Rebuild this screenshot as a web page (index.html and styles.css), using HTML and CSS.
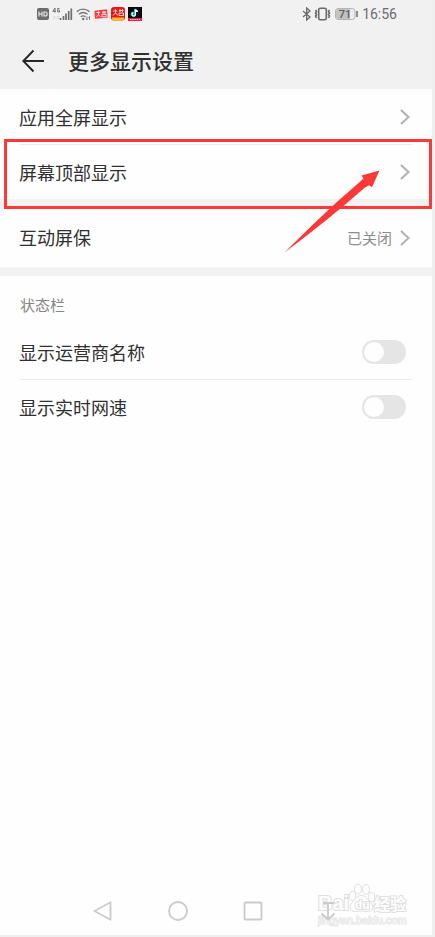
FILE: index.html
```html
<!DOCTYPE html>
<html lang="zh-CN">
<head>
<meta charset="utf-8">
<meta name="viewport" content="width=device-width, initial-scale=1">
<title>更多显示设置</title>
<link rel="stylesheet" href="styles.css">
</head>
<body>
<div class="screen">
  <header class="header">
    <div class="status">
      <div class="status-left">
        <svg width="12" height="12" viewBox="0 0 12 12"><rect width="12" height="12" rx="2" fill="#6c6c6c"/><path d="M2 3.500v5M5 3.500v5M2 6h3M7 4v4h1.200a2 2 0 0 0 0-4z" fill="none" stroke="#eee" stroke-width="1.100"/></svg>
        <svg width="21" height="14" viewBox="0 0 21 14"><path d="M3 5.500V1L.8 4.300h3M7.500 1.500H5.700V5h1.800V3.300h-1" fill="none" stroke="#707070"/><path d="M1 9.500h2v2H1M5 9.500h2v2H5z" fill="none" stroke="#ddd"/><path d="M8.500 13v-2M11.500 13V9M14 13V6.500M16.700 13V4M19.300 13V1.500" stroke="#707070" stroke-width="1.700"/></svg>
        <svg width="15" height="14" viewBox="0 0 15 14"><g fill="none" stroke="#777" stroke-width="1.400"><path d="M.8 4.600q6.200-5 12.700 0M2.800 7.300q4.400-3.700 8.700 0M4.800 9.800q2.300-1.800 4.700 0"/></g><circle cx="7.200" cy="12" r="1.200" fill="#777"/><path d="M11 9.500v3.500M10 11.500l1 1.500M13.500 13V9.500M12.500 11l1-1.500" stroke="#777" stroke-width=".9" fill="none"/></svg>
        <svg width="14" height="12" viewBox="0 0 15 12"><path d="M.5 2.500L14 1l.7 9L1 11z" fill="#f33b40"/><path d="M2.500 4.500h4M4.700 3v4L2.500 9M5 7l1.800 2M8.500 4h4.500M9.800 3v3M11.700 3v3M8.500 6.500h4.500v2.500h-4.500z" stroke="#fff" stroke-width=".8" fill="none"/></svg>
        <svg width="14" height="14" viewBox="0 0 14 14"><rect width="14" height="13.500" rx="3" fill="#ee1515"/><path d="M1 10.500h12v1a2 2 0 0 1-2 2H3a2 2 0 0 1-2-2z" fill="#ffc22e"/><path d="M2 4h4.500M4.500 2v4L2 8.500M4.800 6l2 2.500M8 3.500h4.500M9 2v3M11.500 2v3M8 6h4.500v2.500H8z" stroke="#ffe9df" stroke-width=".9" fill="none"/></svg>
        <svg width="14" height="14" viewBox="0 0 14 14"><path d="M0 0h14v11H0z" fill="#090909"/><path d="M0 11h14v3H0z" fill="#fb1747"/><path d="M2 12.500h10" stroke="#fff" stroke-width=".8" stroke-dasharray="1.500 .7"/><path d="M7 2v5a1.700 1.700 0 1 1-1.700-1.700M7 2q.5 2 2.700 2.200" fill="none" stroke="#20dce8" stroke-width="1.800"/><path d="M7.500 2.500v5A1.700 1.700 0 1 1 5.800 5.800M7.500 2.500Q8 4.300 10 4.500" fill="none" stroke="#fff" stroke-width="1.200"/></svg>
      </div>
      <div class="status-right">
        <svg width="10" height="14" viewBox="0 0 10 14"><path d="M1 4l7 6-3.300 3V1L8 4l-7 6" fill="none" stroke="#6a6a6a" stroke-width="1.300"/></svg>
        <svg width="17" height="14" viewBox="0 0 17 14"><rect x="4.700" y="1.200" width="7.600" height="11.600" rx="1.500" fill="none" stroke="#696969" stroke-width="1.600"/><path d="M1.500 3l1 1.500-1 1.500 1 1.500-1 1.500 1 2M15.500 3l-1 1.500 1 1.500-1 1.500 1 1.500-1 2" fill="none" stroke="#696969" stroke-width="1.600"/></svg>
        <svg class="battery" width="23" height="12" viewBox="0 0 23 12"><rect x=".5" y=".5" width="19.500" height="11" rx="2.500" fill="#ededed" stroke="#b5b5b5"/><path d="M3 1h12v10H3a2 2 0 0 1-2-2V3a2 2 0 0 1 2-2z" fill="#c2c2c2"/><path d="M22 3v6" stroke="#777" stroke-width="1.600"/><text class="charge" x="10" y="10" text-anchor="middle">71</text></svg>
        <time class="clock">16:56</time>
      </div>
    </div>
    <div class="titlebar">
      <button class="back" aria-label="返回"><svg width="24" height="24" viewBox="0 0 24 24"><path d="M22 12H1.500M11.500 1.500L1.300 12l10.200 10.500" fill="none" stroke="#292929" stroke-width="2"/></svg></button>
      <h1>更多显示设置</h1>
    </div>
  </header>
  <main>
    <section class="group">
      <button class="row divided"><span class="name">应用全屏显示</span><svg class="chevron" viewBox="0 0 10 16"><path d="M1 1l7.500 7L1 15"/></svg></button>
      <div class="marked">
        <button class="row"><span class="name">屏幕顶部显示</span><svg class="chevron" viewBox="0 0 10 16"><path d="M1 1l7.500 7L1 15"/></svg></button>
        <div class="frame"></div>
        <svg class="arrow" width="96" height="84" viewBox="0 0 96 84"><path d="M95.500 .5L77.500 5.500l2 3L74 13.500 54 31Q30 53 .5 82.500q32-24 56.500-44.500L81 17.500l4.300-2.200 2.700 2z" fill="#fc3838"/></svg>
      </div>
    </section>
    <section class="group">
      <button class="row tall"><span class="name">互动屏保</span><span class="value">已关闭</span><svg class="chevron" viewBox="0 0 10 16"><path d="M1 1l7.500 7L1 15"/></svg></button>
    </section>
    <section class="group">
      <h2>状态栏</h2>
      <label class="row divided"><span class="name">显示运营商名称</span><input class="switch" type="checkbox" role="switch"></label>
      <label class="row"><span class="name">显示实时网速</span><input class="switch" type="checkbox" role="switch"></label>
    </section>
  </main>
  <nav class="nav">
    <button aria-label="返回上一页"><svg width="20" height="20" viewBox="0 0 20 20"><path d="M17.500 1.200v17.600L1.500 10z"/></svg></button>
    <button aria-label="主屏幕"><svg width="20" height="20" viewBox="0 0 20 20"><circle cx="10" cy="10" r="9"/></svg></button>
    <button aria-label="最近任务"><svg width="20" height="20" viewBox="0 0 20 20"><rect x="1.500" y="1.500" width="17" height="17" rx="1"/></svg></button>
    <button class="pull" aria-label="下拉通知"><svg width="20" height="20" viewBox="0 0 20 20"><path d="M5 2h11M10 2v16M3.500 12.500l6.500 6 6.500-6"/></svg></button>
    <svg class="watermark" width="92" height="44" viewBox="0 0 92 44">
      <text class="brand" x="1" y="27">Bai</text>
      <text class="zh" x="57" y="27">经验</text><text class="site" x="1" y="41">jingyan.baidu.com</text>
      <g class="paw"><ellipse cx="35.500" cy="13" rx="3.200" ry="4.700"/><ellipse cx="41" cy="6" rx="3.500" ry="5"/><ellipse cx="49" cy="6.500" rx="3.500" ry="5"/><ellipse cx="54.500" cy="14" rx="3.200" ry="4.700"/><path d="M44.500 12.500c4 0 6 4 9 7 5 5 1 9.500-3.500 9-4-.6-7-.6-11 0-5 .6-8.500-4-4-9 3-3 5.500-7 9.500-7z"/></g>
      <text class="du" x="38" y="26">du</text>
    </svg>
  </nav>
</div>
</body>
</html>
```
FILE: styles.css
```css
* { box-sizing: border-box; }

body {
  margin: 0;
  background: #efefef;
  color: #303030;
  font-family: Roboto, "Noto Sans CJK SC", sans-serif;
}

button {
  border: 0;
  padding: 0;
  background: none;
  color: inherit;
  font: inherit;
  text-align: left;
}

svg { display: block; flex: none; }

.screen {
  display: flex;
  flex-direction: column;
  min-height: calc(100vh - 2px);
  margin: 0 3px 2px 0;
  background: #fefefe;
}

.header { background: #f1f1f1; }

.status {
  display: flex;
  justify-content: space-between;
  align-items: center;
  height: 28px;
  padding: 0 35px 0 37px;
}

.status-left, .status-right { display: flex; align-items: center; gap: 3px; }

.status-right { gap: 2px; }

.battery { margin: 0 2px; }

.charge { font-size: 11px; font-weight: 500; fill: #5c5c5c; }

.clock { font-size: 14px; line-height: 20px; color: #6c6c6c; }

.titlebar {
  display: flex;
  align-items: center;
  gap: 22px;
  height: 61px;
  padding: 4px 22px 0;
}

h1 { margin: 0; padding-top: 2px; font-size: 21px; line-height: 32px; font-weight: 500; }

main {
  display: flex;
  flex-direction: column;
  gap: 9px;
  background: #f1f1f1;
}

.group { background: #fefefe; }

.row {
  position: relative;
  display: flex;
  align-items: center;
  width: 100%;
  height: 54px;
  padding: 0 22px 0 19px;
  font-size: 18px;
  line-height: 26px;
}

.name { flex: 1; padding-top: 3px; }

.tall { height: 59px; }

.divided { height: 56px; }

.divided::after {
  content: "";
  position: absolute;
  right: 20px;
  bottom: 0;
  left: 20px;
  border-bottom: 1px solid #ebebeb;
}

.value { margin-right: 8px; padding-top: 2px; font-size: 15px; color: #8d8d8d; }

.chevron {
  width: 10px;
  height: 16px;
  fill: none;
  stroke: #b1b1b1;
  stroke-width: 2;
}

.marked { position: relative; }

.frame {
  position: absolute;
  inset: -6px 0 -10px 4px;
  border: 3px solid #fc3838;
  pointer-events: none;
}

.arrow {
  position: absolute;
  top: 25px;
  right: 52px;
  z-index: 1;
  pointer-events: none;
}

h2 {
  margin: 0;
  padding: 19px 20px 7px;
  font-size: 15px;
  line-height: 22px;
  font-weight: 400;
  color: #858585;
}

.switch {
  position: relative;
  width: 44px;
  height: 24px;
  margin: 0 4px 0 0;
  appearance: none;
  border-radius: 12px;
  background: #e5e5e5;
}

.switch::before {
  content: "";
  position: absolute;
  top: 2px;
  left: 2px;
  width: 20px;
  height: 20px;
  border-radius: 50%;
  background: #fefefe;
}

.switch:checked { background: #4a90f5; }
.switch:checked::before { left: 22px; }

.nav {
  position: relative;
  display: flex;
  justify-content: center;
  margin-top: auto;
  height: 48px;
  padding-right: 2px;
}

.nav button { display: grid; place-items: center; width: 75px; }

.nav button svg { fill: none; stroke: #cbcbcb; stroke-width: 1.8; stroke-linejoin: round; }

.nav .pull { z-index: 1; }

.watermark {
  position: absolute;
  right: 23px;
  bottom: 8px;
  overflow: visible;
  fill: #fefefe;
  stroke: #dfdfdf;
  stroke-width: 1;
  font-family: "Liberation Sans", "Noto Sans CJK SC", sans-serif;
  pointer-events: none;
}

.watermark text { paint-order: stroke; stroke-width: 2; }
.brand { font-size: 20px; font-weight: 700; }
.watermark .du { font-size: 12px; font-weight: 700; }
.zh { font-size: 16px; font-weight: 700; }
.watermark .site { font-size: 11px; fill: #f4f4f4; stroke-width: 1; }
```
